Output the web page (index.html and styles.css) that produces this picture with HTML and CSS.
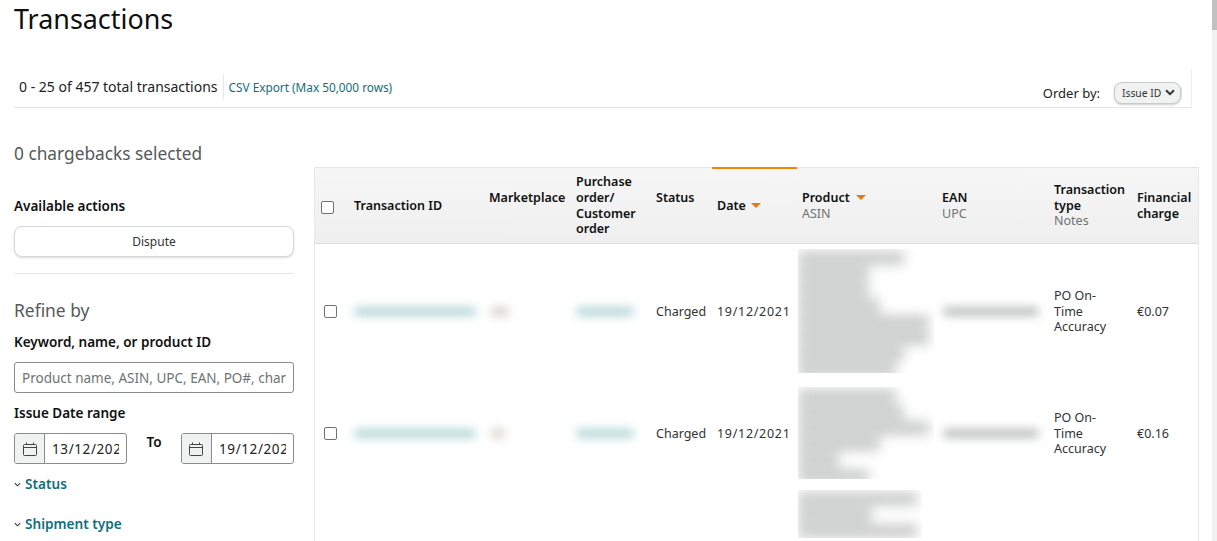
FILE: index.html
```html
<!DOCTYPE html>
<html lang="en">
<head>
<meta charset="utf-8">
<title>Transactions</title>
<link rel="stylesheet" href="styles.css">
</head>
<body>
<div class="page">
  <h1 class="title">Transactions</h1>
  <div class="summary">
    <span class="count">0 - 25 of 457 total transactions</span>
    <a class="csv">CSV Export (Max 50,000 rows)</a>
    <div class="order">
      <span class="order-label">Order by:</span>
      <button class="order-btn">Issue ID
        <svg class="chev" viewBox="0 0 10 7" width="10" height="7"><path d="M1 1.2 5 5.2 9 1.2" fill="none" stroke="#333" stroke-width="2"/></svg>
      </button>
    </div>
  </div>
  <div class="main">
    <aside class="side">
      <div class="selected">0 chargebacks selected</div>
      <div class="label actions-label">Available actions</div>
      <button class="dispute">Dispute</button>
      <hr class="rule">
      <div class="refine">Refine by</div>
      <div class="label keyword-label">Keyword, name, or product ID</div>
      <input class="search" type="text" placeholder="Product name, ASIN, UPC, EAN, PO#, charge">
      <div class="label date-label">Issue Date range</div>
      <div class="dates">
        <div class="date">
          <span class="cal"><svg viewBox="0 0 16 16" width="16" height="16"><path d="M2.5 3.5h11a1 1 0 0 1 1 1v9a1 1 0 0 1-1 1h-11a1 1 0 0 1-1-1v-9a1 1 0 0 1 1-1zM1.5 6.5h13M4.5 1.5v2M11.5 1.5v2" fill="none" stroke="#444" stroke-width="1"/></svg></span>
          <span class="date-val">13/12/2021</span>
        </div>
        <span class="to">To</span>
        <div class="date">
          <span class="cal"><svg viewBox="0 0 16 16" width="16" height="16"><path d="M2.5 3.5h11a1 1 0 0 1 1 1v9a1 1 0 0 1-1 1h-11a1 1 0 0 1-1-1v-9a1 1 0 0 1 1-1zM1.5 6.5h13M4.5 1.5v2M11.5 1.5v2" fill="none" stroke="#444" stroke-width="1"/></svg></span>
          <span class="date-val">19/12/2021</span>
        </div>
      </div>
      <a class="expander status-exp"><svg viewBox="0 0 8 5" width="7" height="5"><path d="M1 1 4 4 7 1" fill="none" stroke="#333" stroke-width="1.2"/></svg>Status</a>
      <a class="expander ship-exp"><svg viewBox="0 0 8 5" width="7" height="5"><path d="M1 1 4 4 7 1" fill="none" stroke="#333" stroke-width="1.2"/></svg>Shipment type</a>
    </aside>
    <div class="table-wrap">
      <table class="grid">
        <colgroup>
          <col class="c-check"><col class="c-id"><col class="c-market"><col class="c-po"><col class="c-status"><col class="c-date"><col class="c-product"><col class="c-ean"><col class="c-type"><col class="c-charge">
        </colgroup>
        <thead>
          <tr>
            <th class="check-cell"><span class="box"></span></th>
            <th>Transaction ID</th>
            <th class="up">Marketplace</th>
            <th>Purchase order/ Customer order</th>
            <th class="up">Status</th>
            <th class="sorted">Date<span class="caret"></span></th>
            <th>Product<span class="caret"></span><span class="sub">ASIN</span></th>
            <th>EAN<span class="sub">UPC</span></th>
            <th>Transaction type<span class="sub">Notes</span></th>
            <th class="up">Financial charge</th>
          </tr>
        </thead>
        <tbody>
          <tr class="row-a">
            <td class="check-cell"><span class="box"></span></td>
            <td><div class="blur teal w-id"></div></td>
            <td><div class="blur tan w-mk"></div></td>
            <td><div class="blur teal w-po"></div></td>
            <td>Charged</td>
            <td class="date-cell">19/12/2021</td>
            <td class="product"><div class="blur-block h-a"><div class="blur-in"><i class="l85"></i><i class="l60"></i><i class="l60"></i><i class="l70"></i><i class="l100"></i><i class="l100"></i><i class="l85"></i><i class="l80"></i></div></div></td>
            <td><div class="blur grey w-ean"></div></td>
            <td class="type-cell">PO On-Time Accuracy</td>
            <td>€0.07</td>
          </tr>
          <tr class="row-b">
            <td class="check-cell"><span class="box"></span></td>
            <td><div class="blur teal w-id"></div></td>
            <td><div class="blur tan w-mk2"></div></td>
            <td><div class="blur teal w-po"></div></td>
            <td>Charged</td>
            <td class="date-cell">19/12/2021</td>
            <td class="product"><div class="blur-block h-b"><div class="blur-in"><i class="l80"></i><i class="l85"></i><i class="l100"></i><i class="l70"></i><i class="l35"></i><i class="l60"></i></div></div></td>
            <td><div class="blur grey w-ean"></div></td>
            <td class="type-cell">PO On-Time Accuracy</td>
            <td>€0.16</td>
          </tr>
          <tr class="row-c">
            <td></td><td></td><td></td><td></td><td></td><td></td>
            <td class="product"><div class="blur-block h-c"><div class="blur-in"><i class="l100"></i><i class="l70"></i><i class="l100"></i></div></div></td>
            <td></td><td></td><td></td>
          </tr>
        </tbody>
      </table>
    </div>
  </div>
</div>
<div class="scrollbar"><div class="thumb"></div></div>
</body>
</html>
```
FILE: styles.css
```css
* { box-sizing: border-box; }
html, body { margin: 0; height: 541px; overflow: hidden; background: #fff; }
body { font-family: "Noto Sans", "Open Sans", sans-serif; font-size: 13px; color: #0f1111; display: flex; }
.page { flex: 1; min-width: 0; padding: 0 18px 0 14px; }
.title { margin: 0; font-size: 26.9px; font-weight: 400; line-height: 37px; height: 70px; }
.summary { height: 38px; display: flex; align-items: center; border-bottom: 1px solid #e3e6e6; width: 1178px; padding: 0 0 3px 5px; border-right: 1px solid #eee; }
.count { font-size: 14px; padding-right: 5px; border-right: 1px solid #e7e7e7; line-height: 26px; color: #222; }
.csv { font-size: 11.8px; color: #0f6f7c; margin-left: 5px; }
.order { margin-left: auto; display: flex; align-items: center; gap: 14px; padding: 11px 5px 0 0; }
.order-label { font-size: 13px; color: #222; }
.order-btn { width: 67px; height: 22px; padding: 0 0 0 7px; margin-right: 5px; border: 1px solid #c8cccc; border-radius: 8px; background: #f0f2f2; box-shadow: 0 1px 2px rgba(15,17,17,.2), 6px 0 0 -5px #e7e7e7; font: 10.3px "Noto Sans", sans-serif; color: #333; display: flex; align-items: center; gap: 4px; }
.chev { flex: none; }
.main { display: flex; gap: 20px; }
.side { width: 280px; flex: none; }
.selected { font-size: 17.3px; color: #565959; margin-top: 34px; line-height: 24px; }
.label { font-size: 13.5px; font-weight: 600; line-height: 18px; color: #0f1111; }
.actions-label { margin-top: 31px; }
.dispute { display: block; width: 280px; height: 31px; margin-top: 11px; background: #fff; border: 1px solid #d5d9d9; border-radius: 8px; box-shadow: 0 1px 2px rgba(15,17,17,.15); font: 12px "Noto Sans", sans-serif; color: #333; }
.rule { border: 0; border-top: 1px solid #e3e6e6; margin: 16px 0 0; }
.refine { font-size: 17.4px; color: #565959; margin-top: 23px; line-height: 26px; }
.keyword-label { margin-top: 10px; }
.search { display: block; width: 280px; height: 31px; margin-top: 11px; padding: 0 7px; border: 1px solid #888c8c; border-radius: 3px; font: 13.5px "Noto Sans", sans-serif; color: #333; outline: 0; }
.search::placeholder { color: #6f7373; opacity: 1; }
.date-label { margin-top: 11px; }
.dates { display: flex; justify-content: space-between; margin-top: 11px; }
.date { width: 113px; height: 31px; border: 1px solid #888c8c; border-radius: 3px; display: flex; overflow: hidden; }
.cal { width: 30px; flex: none; background: #f0f2f2; border-right: 1px solid #888c8c; display: flex; align-items: center; justify-content: center; }
.date-val { font-size: 13.5px; letter-spacing: .6px; margin: 0 7px 0 7px; line-height: 31px; white-space: nowrap; overflow: hidden; color: #222; }
.to { font-size: 13.5px; font-weight: 600; line-height: 18px; }
.expander { display: flex; align-items: center; gap: 4px; font-size: 13.6px; font-weight: 600; color: #0f6f7c; line-height: 18px; }
.status-exp { margin-top: 11px; }
.ship-exp { margin-top: 22px; }
.table-wrap { flex: none; width: 885px; height: 400px; overflow: hidden; border-left: 1px solid #e7e7e7; border-right: 1px solid #e7e7e7; margin-top: 59px; }
.grid { table-layout: fixed; width: 883px; border-collapse: separate; border-spacing: 0; }
.c-check { width: 34px; } .c-id { width: 135px; } .c-market { width: 87px; } .c-po { width: 80px; } .c-status { width: 61px; } .c-date { width: 85px; } .c-product { width: 140px; } .c-ean { width: 112px; } .c-type { width: 83px; } .c-charge { width: 66px; }
th { height: 77px; padding: 0 5px; text-align: left; font-size: 12.5px; font-weight: 600; line-height: 15.7px; color: #0f1111; background: linear-gradient(#f6f6f6, #efefef); border-top: 1px solid #e3e6e6; border-bottom: 1px solid #dcdddd; }
th.up { vertical-align: top; padding-top: 22px; }
th.sorted { border-top: 2px solid #f08804; }
th.check-cell { padding: 3px 0 0 6px; }
.sub { display: block; font-weight: 400; color: #6f7373; }
.caret { display: inline-block; width: 0; height: 0; margin-left: 6px; vertical-align: 2px; border: 5px solid transparent; border-top-color: #e47911; border-bottom-width: 0; }
.sorted .caret { margin-left: 5px; }
td { padding: 1px 5px 0; font-size: 12.5px; line-height: 15.7px; color: #333; vertical-align: middle; }
.date-cell { letter-spacing: .7px; white-space: nowrap; }
.type-cell { padding-right: 15px; }
.row-a td { height: 134px; }
.row-b td { height: 110px; }
.row-c td { height: 60px; vertical-align: top; }
td.check-cell { padding: 0 0 0 9px; }
.box { display: block; width: 13px; height: 13px; border: 1px solid #6f7373; border-radius: 2px; background: #fff; }
.blur { height: 9px; border-radius: 4px; filter: blur(5px); }
.teal { background: #b5d6d8; }
.tan { background: #d6d1ca; }
.grey { background: #bcbebe; }
.w-id { width: 122px; }
.w-mk { width: 18px; margin-left: 2px; }
.w-mk2 { width: 14px; margin-left: 2px; }
.w-po { width: 58px; }
.w-ean { width: 96px; margin-left: 1px; }
td.product { padding: 0 0 0 1px; }
.blur-block { overflow: hidden; }
.blur-in { display: flex; flex-direction: column; gap: 2px; padding-top: 2px; filter: blur(6px); }
.blur-in i { display: block; height: 14px; background: #cbcdcc; }
.h-a { height: 124px; width: 136px; }
.h-b { height: 92px; width: 136px; }
.h-c { height: 48px; width: 124px; margin-top: 2px; }
.l100 { width: 96%; } .l85 { width: 78%; } .l80 { width: 72%; } .l70 { width: 60%; } .l60 { width: 52%; } .l35 { width: 30%; }
.scrollbar { width: 5px; flex: none; background: #f1f1f1; }
.thumb { height: 30px; background: #c1c1c1; }
```
